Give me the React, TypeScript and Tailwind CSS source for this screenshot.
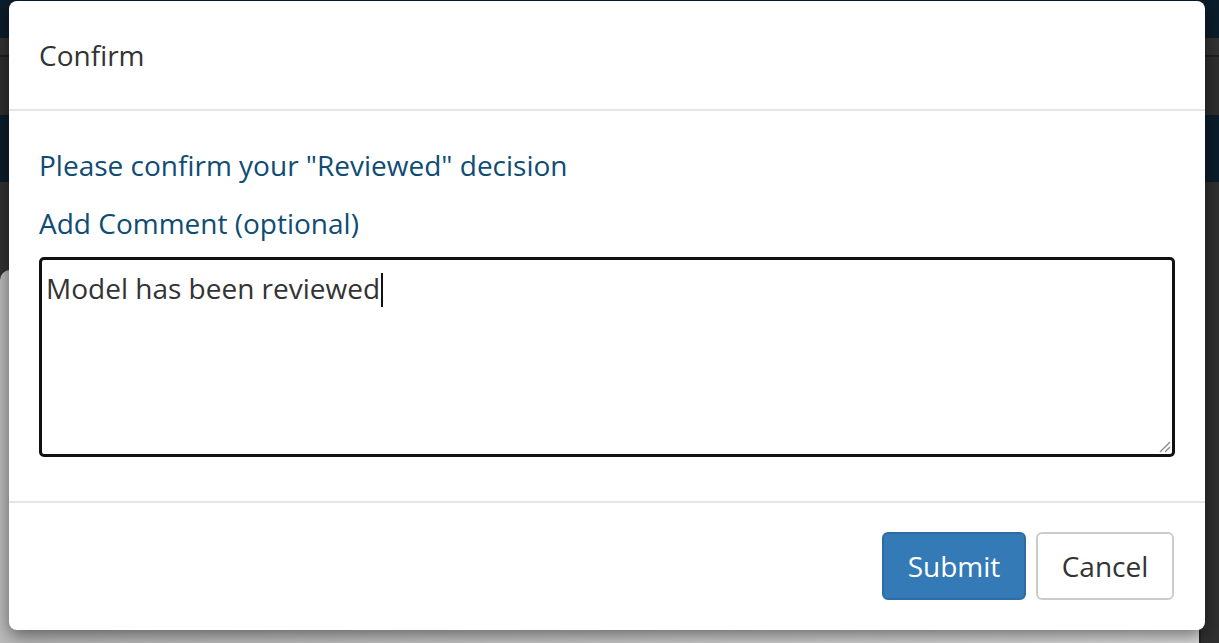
export default function App() {
  return (
    <div className="relative h-[643px] w-[1219px] overflow-hidden bg-[#2f2f2f] font-['Open_Sans',sans-serif]">
      {/* page behind the dialog */}
      <div className="flex h-full flex-col">
        <div className="h-[38px] bg-[#0b1d2b]" />
        <div className="h-[19px] border-b-2 border-[#1f1f1f] bg-[#333333]" />
        <div className="h-[58px] bg-[#2e2e2e]" />
        <div className="h-[67px] bg-[#0b1d2b]" />
        <div className="flex flex-1">
          <div className="flex flex-1 flex-col">
            <div className="h-[88px] bg-[#323232]" />
            <div className="flex-1 rounded-tl-[10px] bg-gradient-to-r from-[#bdbdbd] to-[#e0e0e0]" />
          </div>
          <div className="w-[20px] border-l-2 border-[#222] bg-[#303030]" />
        </div>
      </div>

      {/* dialog */}
      <div className="absolute left-[9px] top-[1px] flex h-[629px] w-[1196px] flex-col rounded-[8px] bg-white shadow-[0_6px_18px_rgba(0,0,0,0.5)]">
        <div className="flex h-[110px] items-center border-b-2 border-[#e5e5e5] px-[30px]">
          <h4 className="text-[28px] leading-[40px] text-[#333333]">Confirm</h4>
        </div>

        <div className="flex h-[390px] flex-col px-[30px] pt-[34px]">
          <p className="text-[28px] leading-[40px] text-[#0f4c75]">
            Please confirm your "Reviewed" decision
          </p>
          <label className="mt-[18px] text-[28px] leading-[40px] text-[#0f4c75]">
            Add Comment (optional)
          </label>
          <div className="relative mt-[14px] h-[200px] w-full rounded-[5px] border-[3px] border-[#111111] px-[4px] pt-[5px]">
            <span className="text-[28px] leading-[40px] text-[#333333]">
              Model has been reviewed
            </span>
            <span className="ml-[1px] inline-block h-[34px] w-[2px] translate-y-[8px] bg-[#111]" />
            <svg
              className="absolute bottom-[1px] right-[1px]"
              width="14"
              height="14"
              viewBox="0 0 14 14"
            >
              <path d="M13 3 L3 13 M13 8 L8 13" stroke="#888" strokeWidth="1.3" />
            </svg>
          </div>
        </div>

        <div className="flex flex-1 items-start justify-end gap-[10px] border-t-2 border-[#e5e5e5] pl-[30px] pr-[31px] pt-[29px]">
          <button className="h-[68px] w-[144px] rounded-[6px] border-2 border-[#2e6da4] bg-[#337ab7] text-[28px] text-white">
            Submit
          </button>
          <button className="h-[68px] w-[138px] rounded-[6px] border-2 border-[#cccccc] bg-white text-[28px] text-[#333333]">
            Cancel
          </button>
        </div>
      </div>
    </div>
  );
}
